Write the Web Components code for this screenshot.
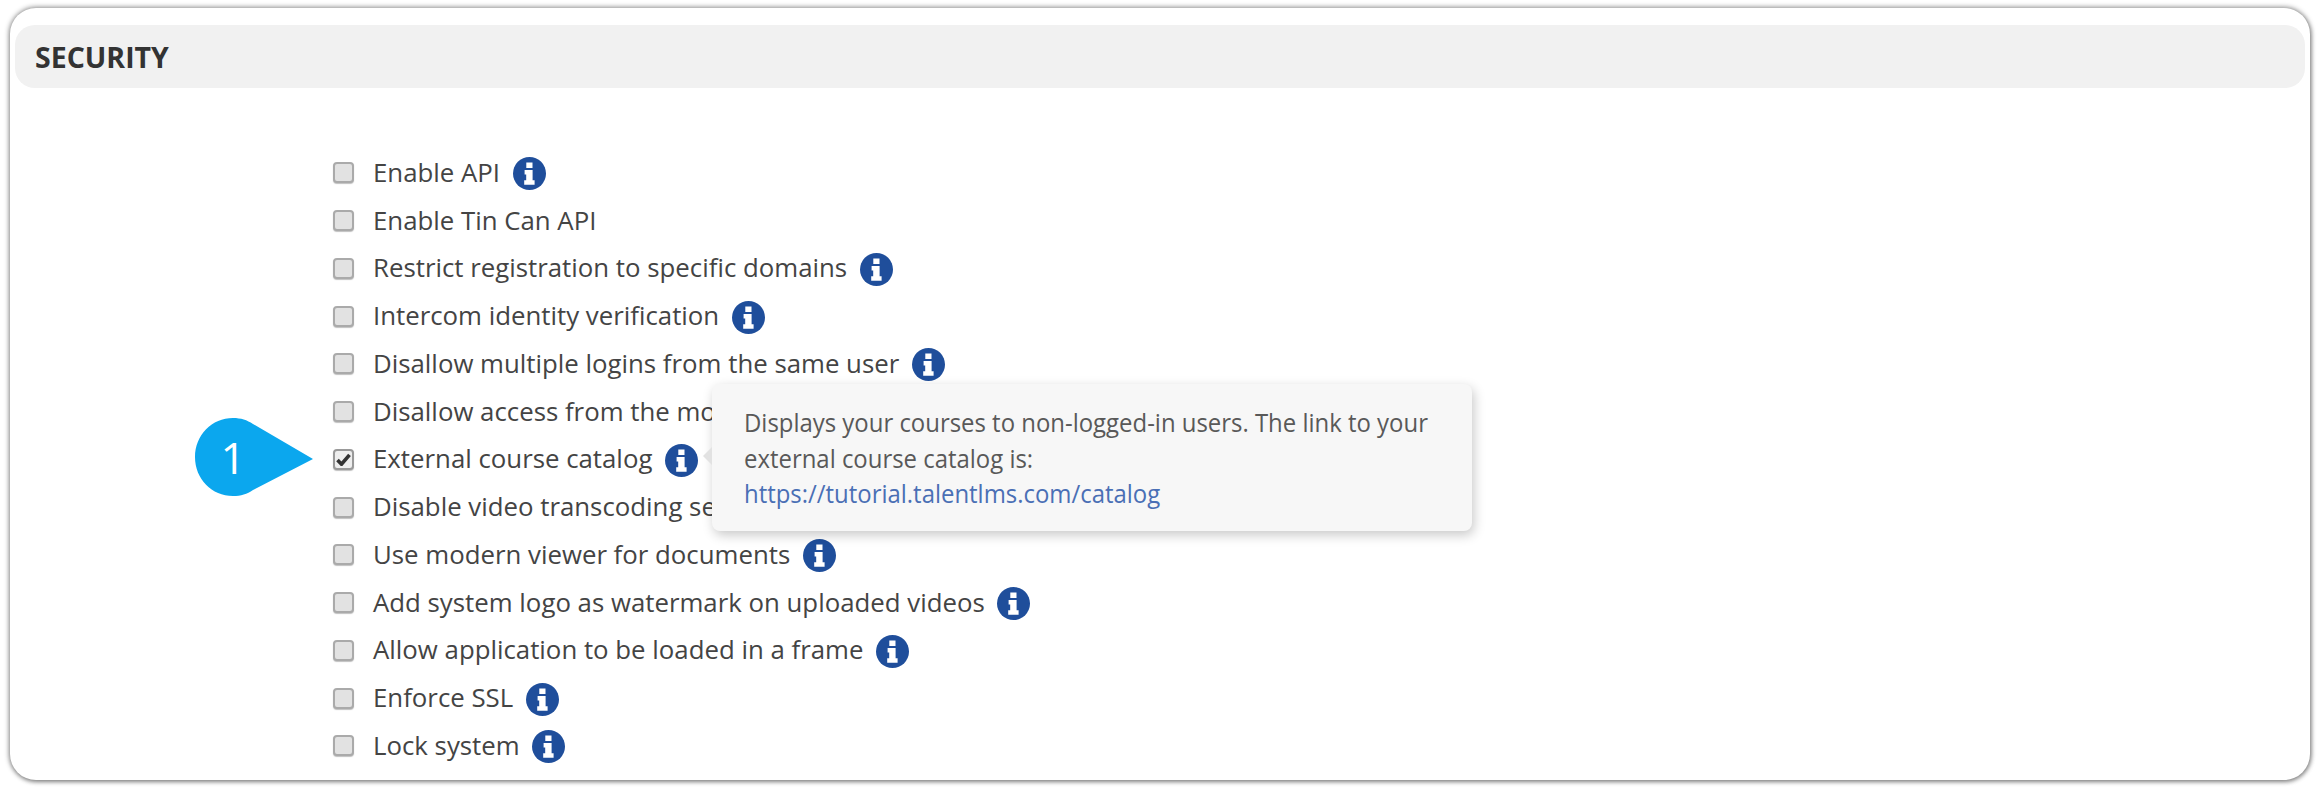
<!DOCTYPE html>
<html><head><meta charset="utf-8"><style>
html,body{margin:0;padding:0;background:#fff}
body{width:2320px;height:792px;overflow:hidden;font-family:"Open Sans",sans-serif}
</style></head><body>
<template id="info-t"><style>:host{display:inline-flex;width:33px;height:33px;flex:none}svg{display:block}</style>
<svg width="33" height="33" viewBox="0 0 33 33"><circle cx="16.5" cy="16.5" r="16.5" fill="#1f4e9b"/><path fill="#fff" d="M13.3 5.6h6.2v5.3h-6.2zM11.6 12.9h8v10.4h2v4.5H11.2v-4.5h2v-5.7h-1.6z"/></svg></template>
<template id="row-t"><style>
:host{display:flex;align-items:center;height:47.75px;color:#444;font-size:25.8px;white-space:nowrap}
.box{width:21px;height:21px;box-sizing:border-box;border:2px solid #aaa;border-radius:4px;background:#e2e2e2;box-shadow:0 1px 1px rgba(0,0,0,.25);margin-right:19px;flex:none;display:flex;align-items:center;justify-content:center}
:host([checked]) .box{background:#eee;border-color:#999}
svg{display:none}:host([checked]) svg{display:block}
.lbl{transform:translateY(-1px)}
info-icon{margin-left:12.5px;transform:translateY(1px)}
:host([noinfo]) info-icon{display:none}
</style><span class="box"><svg width="15" height="13" viewBox="0 0 15 13"><path d="M1.5 7l4 4.2L13.5 1.8" fill="none" stroke="#333" stroke-width="3.6"/></svg></span><span class="lbl"><slot></slot></span><info-icon></info-icon></template>
<template id="head-t"><style>:host{display:flex;align-items:center;height:63px;margin:0 5px;padding:0 20px;background:#f1f1f1;border-radius:20px;font-weight:700;font-size:28.5px;color:#333}</style><slot></slot></template>
<template id="card-t"><style>:host{display:block;position:relative;box-sizing:border-box;width:2300px;height:772px;margin:8px 10px 0;padding-top:17px;background:#fff;border-radius:26px;box-shadow:0 0 5px 1px rgba(0,0,0,.42),1px 2px 4px rgba(0,0,0,.25)}
.list{padding:61px 0 0 323px}</style><slot name="head"></slot><div class="list"><slot></slot></div><slot name="over"></slot></template>
<template id="tip-t"><style>:host{display:block;position:absolute;left:702px;top:376px;width:760px;height:147px;box-sizing:border-box;padding:21px 32px;background:#f7f7f7;border-radius:8px;box-shadow:2px 4px 12px rgba(0,0,0,.22);color:#595959;font-size:26px;line-height:35.5px;white-space:nowrap}
:host::before{content:"";position:absolute;left:-9px;top:63px;border:9px solid transparent;border-left:0;border-right-color:#e2e2e2}
.t{display:block;transform:scaleX(.92);transform-origin:0 0}
::slotted(a){color:#4a6fb5;text-decoration:none}</style><span class="t"><slot></slot></span></template>
<template id="call-t"><style>:host{display:block;position:absolute;left:185px;top:410px;width:120px;height:78px}
svg{position:absolute;left:0;top:0}span{position:absolute;left:0;top:0;width:76px;height:78px;display:flex;align-items:center;justify-content:center;color:#fff;font-size:44px;line-height:1}</style>
<svg width="120" height="78" viewBox="0 0 120 78"><path d="M38 0c8 0 14 2 20 6l60 35-60 31c-6 4-12 6-20 6C17 78 0 61 0 39S17 0 38 0z" fill="#0ba7ee"/></svg><span><slot></slot></span></template>
<script>
function def(n,t){customElements.define(n,class extends HTMLElement{constructor(){super();this.attachShadow({mode:'open'}).append(document.getElementById(t).content.cloneNode(true))}})}
def('info-icon','info-t');def('set-row','row-t');def('sec-head','head-t');def('sec-card','card-t');def('hint-tip','tip-t');def('step-call','call-t');
</script>
<sec-card>
<sec-head slot="head">SECURITY</sec-head>
<set-row>Enable API</set-row>
<set-row noinfo>Enable Tin Can API</set-row>
<set-row>Restrict registration to specific domains</set-row>
<set-row>Intercom identity verification</set-row>
<set-row>Disallow multiple logins from the same user</set-row>
<set-row noinfo>Disallow access from the mobile app</set-row>
<set-row checked>External course catalog</set-row>
<set-row noinfo>Disable video transcoding service</set-row>
<set-row>Use modern viewer for documents</set-row>
<set-row>Add system logo as watermark on uploaded videos</set-row>
<set-row>Allow application to be loaded in a frame</set-row>
<set-row>Enforce SSL</set-row>
<set-row>Lock system</set-row>
<hint-tip slot="over">Displays your courses to non-logged-in users. The link to your<br>external course catalog is:<br><a>https://tutorial.talentlms.com/catalog</a></hint-tip>
<step-call slot="over">1</step-call>
</sec-card>
</body></html>
